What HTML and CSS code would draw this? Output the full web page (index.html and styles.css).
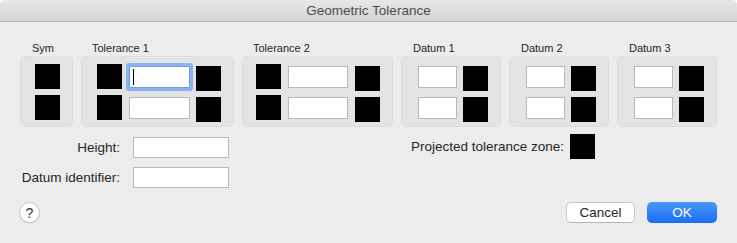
FILE: index.html
```html
<!DOCTYPE html>
<html lang="en">
<head>
<meta charset="UTF-8" />
<title>Geometric Tolerance</title>
<link rel="stylesheet" href="styles.css">
</head>
<body>

<div class="window">
  <div class="titlebar">Geometric Tolerance</div>

  <!-- Symbol / tolerance / datum groups -->
  <div class="groups">
    <div class="group g-sym">
      <div class="group-label">Sym</div>
      <div class="group-box">
        <div class="row"><div class="sq"></div></div>
        <div class="row"><div class="sq"></div></div>
      </div>
    </div>

    <div class="group g-tol1">
      <div class="group-label">Tolerance 1</div>
      <div class="group-box">
        <div class="row">
          <div class="sq"></div>
          <div class="field wide focus"><span class="caret"></span></div>
          <div class="sq low"></div>
        </div>
        <div class="row">
          <div class="sq"></div>
          <div class="field wide"></div>
          <div class="sq low"></div>
        </div>
      </div>
    </div>

    <div class="group g-tol2">
      <div class="group-label">Tolerance 2</div>
      <div class="group-box">
        <div class="row">
          <div class="sq"></div>
          <div class="field wide2"></div>
          <div class="sq low"></div>
        </div>
        <div class="row">
          <div class="sq"></div>
          <div class="field wide2"></div>
          <div class="sq low"></div>
        </div>
      </div>
    </div>

    <div class="group g-datum">
      <div class="group-label">Datum 1</div>
      <div class="group-box">
        <div class="row"><div class="field narrow"></div><div class="sq low"></div></div>
        <div class="row"><div class="field narrow"></div><div class="sq low"></div></div>
      </div>
    </div>

    <div class="group g-datum">
      <div class="group-label">Datum 2</div>
      <div class="group-box">
        <div class="row"><div class="field narrow"></div><div class="sq low"></div></div>
        <div class="row"><div class="field narrow"></div><div class="sq low"></div></div>
      </div>
    </div>

    <div class="group g-datum">
      <div class="group-label">Datum 3</div>
      <div class="group-box">
        <div class="row"><div class="field narrow"></div><div class="sq low"></div></div>
        <div class="row"><div class="field narrow"></div><div class="sq low"></div></div>
      </div>
    </div>
  </div>

  <!-- Height / datum identifier / projected zone -->
  <div class="extras">
    <div class="form-grid">
      <label>Height:</label>
      <div class="field long"></div>
      <label>Datum identifier:</label>
      <div class="field long"></div>
    </div>
    <div class="zone">
      <span>Projected tolerance zone:</span>
      <div class="sq"></div>
    </div>
  </div>

  <div class="footer">
    <button type="button" class="btn-help">?</button>
    <div class="actions">
      <button type="button" class="btn">Cancel</button>
      <button type="button" class="btn btn-ok">OK</button>
    </div>
  </div>
</div>

</body>
</html>
```

FILE: styles.css
```css
body {
  margin: 0;
  background: #ffffff;
  font-family: 'Liberation Sans', Arial, sans-serif;
  color: #262626;
}
.window {
  width: 737px;
  height: 243px;
  background: #ececec;
  border-radius: 5px 5px 0 0;
  overflow: hidden;
}
.titlebar {
  height: 21px;
  line-height: 22px;
  text-align: center;
  font-size: 13.5px;
  color: #4d4d4d;
  background: linear-gradient(#e8e8e8, #d3d3d3);
  border-bottom: 1px solid #b8b8b8;
}
.groups {
  display: flex;
  gap: 8px;
  margin: 20px 0 0 20px;
}
.group-label {
  font-size: 11px;
  line-height: 13px;
  height: 13px;
  margin: 0 0 1px 12px;
}
.g-sym .group-label {
  margin-left: 12px;
}
.g-tol1 .group-label,
.g-tol2 .group-label {
  margin-left: 11px;
}
.g-sym { width: 53px; }
.g-tol1 { width: 153px; }
.g-tol2 { width: 151px; }
.g-datum { width: 100px; }
.group-box {
  display: flex;
  flex-direction: column;
  gap: 6px;
  height: 71px;
  box-sizing: border-box;
  padding: 7px 12px 8px 0;
  background: #e3e3e3;
  border: 1px solid #dedede;
  border-radius: 5px;
}
.row {
  display: flex;
  justify-content: flex-end;
  align-items: flex-start;
  height: 25px;
  gap: 7px;
}
.g-datum .row {
  gap: 6px;
}
.g-tol1 .row .low {
  margin-left: -1px;
}
.sq {
  width: 25px;
  height: 25px;
  background: #000;
  flex: none;
}
.sq.low {
  margin-top: 2px;
}
.field {
  height: 22px;
  box-sizing: border-box;
  margin-top: 2px;
  background: #fff;
  border: 1px solid #b9b9b9;
  flex: none;
  position: relative;
}
.field.wide { width: 61px; }
.field.wide2 { width: 60px; }
.field.narrow { width: 39px; }
.field.long { width: 96px; height: 21px; margin: 0; }
.field.focus {
  border-color: #6e9de6;
  box-shadow: 0 0 0 3px #8db3ef;
  border-radius: 1px;
}
.caret {
  position: absolute;
  left: 3px;
  top: 2px;
  width: 1px;
  height: 16px;
  background: #000;
}
.extras {
  display: flex;
  align-items: flex-start;
  margin-top: 7px;
  padding-left: 20px;
}
.form-grid {
  display: grid;
  grid-template-columns: 100px 96px;
  column-gap: 13px;
  row-gap: 9px;
  align-items: center;
  margin-top: 3px;
}
.form-grid label {
  text-align: right;
  font-size: 13.5px;
}
.zone {
  display: flex;
  align-items: center;
  gap: 6px;
  margin-left: 182px;
  font-size: 13.5px;
}
.footer {
  display: flex;
  justify-content: space-between;
  align-items: center;
  margin-top: 14px;
  padding: 0 20px 0 19px;
}
.btn-help {
  width: 21px;
  height: 21px;
  padding: 0;
  border-radius: 50%;
  border: 1px solid #c4c4c4;
  background: #fff;
  font-family: 'Liberation Sans', Arial, sans-serif;
  font-size: 14px;
  color: #333;
  box-shadow: 0 1px 1px rgba(0, 0, 0, 0.08);
}
.actions {
  display: flex;
  gap: 12px;
}
.btn {
  width: 69px;
  height: 21px;
  padding: 0;
  font-family: 'Liberation Sans', Arial, sans-serif;
  font-size: 13.5px;
  color: #262626;
  background: #fff;
  border: 1px solid #c8c8c8;
  border-bottom-color: #b4b4b4;
  border-radius: 5px;
}
.btn-ok {
  width: 70px;
  color: #fff;
  border: none;
  background: linear-gradient(#4a98fa, #1a6ef5);
}
```
